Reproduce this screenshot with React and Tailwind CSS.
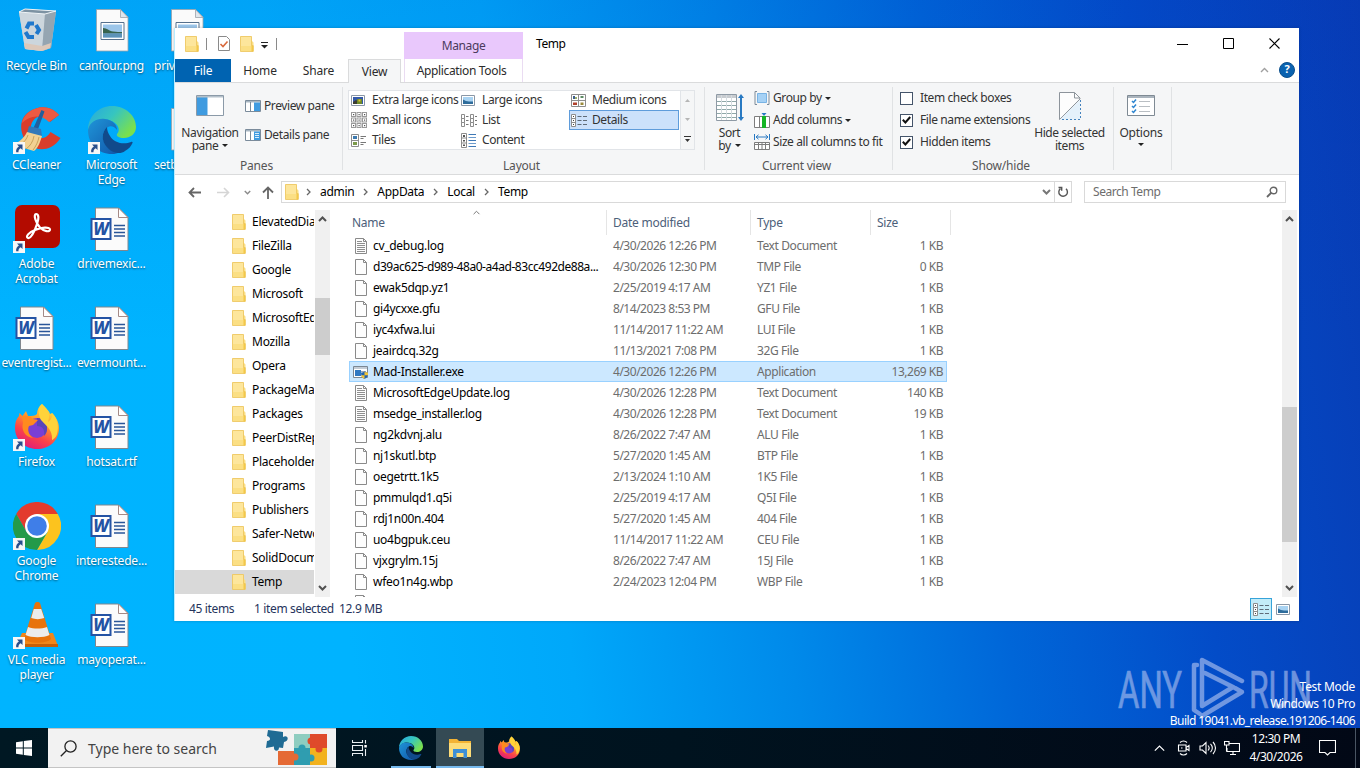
import React, { useState } from "react";

const files = [
  { name: "cv_debug.log", date: "4/30/2026 12:26 PM", type: "Text Document", size: "1 KB", icon: "text" },
  { name: "d39ac625-d989-48a0-a4ad-83cc492de88a...", date: "4/30/2026 12:30 PM", type: "TMP File", size: "0 KB" },
  { name: "ewak5dqp.yz1", date: "2/25/2019 4:17 AM", type: "YZ1 File", size: "1 KB" },
  { name: "gi4ycxxe.gfu", date: "8/14/2023 8:53 PM", type: "GFU File", size: "1 KB" },
  { name: "iyc4xfwa.lui", date: "11/14/2017 11:22 AM", type: "LUI File", size: "1 KB" },
  { name: "jeairdcq.32g", date: "11/13/2021 7:08 PM", type: "32G File", size: "1 KB" },
  { name: "Mad-Installer.exe", date: "4/30/2026 12:26 PM", type: "Application", size: "13,269 KB", icon: "app" },
  { name: "MicrosoftEdgeUpdate.log", date: "4/30/2026 12:28 PM", type: "Text Document", size: "140 KB", icon: "text" },
  { name: "msedge_installer.log", date: "4/30/2026 12:28 PM", type: "Text Document", size: "19 KB", icon: "text" },
  { name: "ng2kdvnj.alu", date: "8/26/2022 7:47 AM", type: "ALU File", size: "1 KB" },
  { name: "nj1skutl.btp", date: "5/27/2020 1:45 AM", type: "BTP File", size: "1 KB" },
  { name: "oegetrtt.1k5", date: "2/13/2024 1:10 AM", type: "1K5 File", size: "1 KB" },
  { name: "pmmulqd1.q5i", date: "2/25/2019 4:17 AM", type: "Q5I File", size: "1 KB" },
  { name: "rdj1n00n.404", date: "5/27/2020 1:45 AM", type: "404 File", size: "1 KB" },
  { name: "uo4bgpuk.ceu", date: "11/14/2017 11:22 AM", type: "CEU File", size: "1 KB" },
  { name: "vjxgrylm.15j", date: "8/26/2022 7:47 AM", type: "15J File", size: "1 KB" },
  { name: "wfeo1n4g.wbp", date: "2/24/2023 12:04 PM", type: "WBP File", size: "1 KB" },
];

const folders = [
  "ElevatedDia",
  "FileZilla",
  "Google",
  "Microsoft",
  "MicrosoftEd",
  "Mozilla",
  "Opera",
  "PackageMa",
  "Packages",
  "PeerDistRep",
  "Placeholder",
  "Programs",
  "Publishers",
  "Safer-Netwo",
  "SolidDocum",
  "Temp",
];

/* ---------- small icons ---------- */

const Folder = ({ className = "w-3.5 h-4" }) => (
  <svg viewBox="0 0 14 16" className={className}>
    <path d="M.5.5h11v4l2 2v9H.5z" fill="#fbdf84" />
    <path d="M.5.5h11v9.5h-11z" fill="#fde69c" />
    <path d="M11.5 9.5h2v6h-2z" fill="#f5c842" />
    <path d="M.5.5h11v9h1.500v6H.5z" fill="none" stroke="#ecc45a" strokeWidth=".8" />
  </svg>
);

const FileIcon = ({ type }) => {
  if (type === "app") {
    return (
      <svg viewBox="0 0 16 16" className="w-4 h-4">
        <path d="M.5 2.500h14v11H.5z" fill="#fff" stroke="#7b8793" />
        <path d="M1 3h13v2H1z" fill="#c3ccd6" />
        <path d="M2 6h6v6H2z" fill="#2f78c2" />
        <path d="M8 7h5v1H8z" fill="#9aa7b4" />
        <path d="M11.500 7.500c1 .8 2.300 1 3.500 1 0 3.500-1 5.500-3.500 6.500C9 14 8 12 8 8.500c1.200 0 2.500-.2 3.500-1z" fill="#2264ae" />
        <path d="M11.500 8v3.300H15C15 8.800 15 9 15 8.500c-1.200 0-2.500-.2-3.500-.5zM8.200 11.300h3.300V15C9.500 14.200 8.500 13 8.200 11.300z" fill="#f3c436" />
      </svg>
    );
  }
  return (
    <svg viewBox="0 0 12 16" className="w-3 h-4">
      <path d="M.5.5h8l3 3v12H.5z" fill="#fdfdfd" stroke="#8a8a8a" />
      <path d="M8.500.5v3h3" fill="none" stroke="#8a8a8a" />
      {type === "text" && <path d="M2 3.500h5M2 5.500h8M2 7.500h8M2 9.500h8M2 11.500h8M2 13.500h8" stroke="#8f8f8f" />}
    </svg>
  );
};

const Caret = () => (
  <svg viewBox="0 0 6 3" className="w-[6px] h-[3px] shrink-0">
    <path d="M0 0h6L3 3z" fill="#222" />
  </svg>
);

const Crumb = () => (
  <svg viewBox="0 0 5 8" className="w-[5px] h-2 shrink-0">
    <path d="M1 1l3 3-3 3" fill="none" stroke="#666" strokeWidth="1.300" />
  </svg>
);

const Chevron = ({ up, className = "w-[9px] h-[6px]", color = "#505050", width = 2 }) => (
  <svg viewBox="0 0 9 6" className={className}>
    <path d={up ? "M1 5l3.500-3.500L8 5" : "M1 1l3.500 3.500L8 1"} fill="none" stroke={color} strokeWidth={width} />
  </svg>
);

const Picture = ({ variant }) => (
  <svg viewBox="0 0 14 11" className="w-3.5 h-[11px]">
    <path d="M.5.5h13v10H.5z" fill="#fff" stroke="#8a97a6" />
    <path d="M2 2h10v7H2z" fill={variant === "xl" ? "#3459a8" : "#a9d3f2"} />
    {variant === "xl" ? (
      <>
        <path d="M2 7l3-2 3 2v2H2z" fill="#3c3c30" />
        <path d="M6 4h5v5H6z" fill="#6d8a2a" />
        <path d="M7.500 4.500h2v2h-2z" fill="#e5c32e" />
      </>
    ) : (
      <path d="M2 4.500l3 1.500 3 .5 4 0v2.500H2z" fill="#2e6c9b" />
    )}
  </svg>
);

const MediumIcon = () => (
  <svg viewBox="0 0 15 13" className="w-[15px] h-[13px]">
    <path d="M.5.500h14v12H.5zM7.500.5v12M.5 6.500h14" fill="#fff" stroke="#8d8d8d" />
    <path d="M2 2h2v3H2z" fill="#3f5f8f" />
    <path d="M4 3h2v2H4z" fill="#9ab06a" />
    <path d="M9.500 2h3v2h-3z" fill="#5c8b64" />
    <path d="M2 8.500h4V11H2z" fill="#b0412c" />
    <path d="M9.500 8.500h3V11h-3z" fill="#9a8a3a" />
  </svg>
);

const SmallIcon = () => (
  <svg viewBox="0 0 16 16" className="w-4 h-4">
    {[0, 5.5, 11].map((y) =>
      [0, 5.5, 11].map((x) => (
        <g key={`${x}-${y}`}>
          <rect x={x + 0.5} y={y + 0.5} width="4" height="4" fill="#fff" stroke="#9a9a9a" />
          <rect x={x + 2} y={y + 2} width="1.200" height="1.200" fill="#555" />
        </g>
      ))
    )}
  </svg>
);

const ListIcon = () => (
  <svg viewBox="0 0 16 13" className="w-4 h-[13px]">
    {[0, 4, 8].map((y) => (
      <g key={y} fill="none" stroke="#8d8d8d">
        <path d={`M.5 ${y + 0.5}h3v4h-3zM9.500 ${y + 0.5}h3v4h-3z`} />
        <path d={`M5 ${y + 2.5}h2.500M14 ${y + 2.5}h2`} stroke="#777" />
      </g>
    ))}
  </svg>
);

const DetailsIcon = () => (
  <svg viewBox="0 0 16 13" className="w-4 h-[13px]">
    <path d="M.5.5h4v12h-4zM.5 4.500h4M.5 8.500h4" fill="#fff" stroke="#8d8d8d" />
    <path d="M2 2h1v1H2zM2 6h1v1H2zM2 10h1v1H2z" fill="#444" />
    <path d="M6.500 2.500h4M12 2.500h4M6.500 6.500h4M12 6.500h4M6.500 10.500h4M12 10.500h4" stroke="#5f6b78" />
  </svg>
);

const TilesIcon = () => (
  <svg viewBox="0 0 15 13" className="w-[15px] h-[13px]">
    <path d="M.5.5h7v12h-7zM.5 6.500h7" fill="#fff" stroke="#8d8d8d" />
    <path d="M2 2h4v3H2z" fill="#3f7bb0" />
    <path d="M2 8h4v3H2z" fill="#7b9a4a" />
    <path d="M9.500 2.500H15M9.500 4.500h3M9.500 8.500H15M9.500 10.500h3" stroke="#777" />
  </svg>
);

const ContentIcon = () => (
  <svg viewBox="0 0 15 15" className="w-[15px] h-[15px]">
    <path d="M.5.5h5v14h-5zM.5 5h5M.5 10h5" fill="#fff" stroke="#8d8d8d" />
    <path d="M2 2h2v2H2zM2 7h2v1.500H2zM2 11.500h2v1.500H2z" fill="#555" />
    <path d="M7.500 1.500H15M7.500 7.500H15M7.500 13.500H15" stroke="#3f78b5" />
    <path d="M7.500 4.500H15M7.500 10.500H15" stroke="#6d9bcc" />
  </svg>
);

const PaneIcon = ({ kind }) => (
  <svg viewBox="0 0 16 12" className="w-4 h-3 shrink-0">
    <path d="M.5.5h15v11H.5z" fill="#fff" stroke="#7a8b9b" />
    <path d="M1 1h14v1.500H1z" fill="#a8b6c2" />
    <path d="M5.500 2v9" stroke="#7a8b9b" />
    <path d="M9 2.500h6V11H9z" fill="#3f9be0" />
    {kind === "details" && <path d="M10 4.500h4M10 6.500h4M10 8.500h4" stroke="#d6ebfb" />}
  </svg>
);

/* ---------- desktop icons ---------- */

const Shortcut = () => (
  <svg viewBox="0 0 12 12" className="absolute left-0 bottom-0 w-3 h-3">
    <path d="M0 0h12v12H0z" fill="#f7f7f7" />
    <path d="M4 2.500h5.500V8L7.700 6.300C6 7.300 5.300 8.500 5.500 10.300H3.200C2.700 7.500 4 5.700 5.900 4.500z" fill="#2a4f8c" />
  </svg>
);

const WordDoc = () => (
  <svg viewBox="0 0 48 48" className="w-12 h-12">
    <path d="M7.500 3h23l9.500 9.500v33H7.500z" fill="#fbfbfb" stroke="#80878e" />
    <path d="M30.500 3v9.500H40z" fill="#fff" stroke="#a58a86" strokeWidth="1" />
    <path d="M26 20.500h11M26 24h11M26 27.500h11M26 31h11" stroke="#2a5699" strokeWidth="1.300" />
    <path d="M3.500 14h19v20h-19z" fill="#fff" stroke="#2453a4" strokeWidth="2" />
    <text x="13" y="30" fontSize="17" fontWeight="800" fontStyle="italic" textAnchor="middle" fill="#2453a4" fontFamily="Noto Sans, sans-serif">W</text>
  </svg>
);

const PngDoc = () => (
  <svg viewBox="0 0 48 48" className="w-12 h-12">
    <path d="M8.500 2.500h24l7.500 7.500v34H8.500z" fill="#fafafa" stroke="#9aa2aa" strokeWidth=".8" />
    <path d="M32.500 2.500v8H40z" fill="#dfe6ec" stroke="#9aa2aa" strokeWidth=".8" />
    <path d="M13 15.500h23v17H13z" fill="#fff" stroke="#56708c" />
    <path d="M15 17.500h19v13H15z" fill="#9cc6ea" />
    <path d="M15 21c4 0 6 3 10 3.500s6 .5 9 .5v1.500H15z" fill="#37634e" />
    <path d="M15 26.500h19v4H15z" fill="#5d93b8" />
  </svg>
);

const RecycleBin = () => (
  <svg viewBox="0 0 48 48" className="w-12 h-12">
    <path d="M6 5l6-3 31 2-5 37-9 3-17-2z" fill="#b9c6d0" />
    <path d="M6 5l26 2-3 37-17-2z" fill="#ccd6dd" />
    <path d="M32 7l11-3-5 37-9 3z" fill="#95a5b1" />
    <path d="M6 5l6-3 31 2-11 3z" fill="#7d93a3" stroke="#eef3f6" strokeWidth="1" />
    <path d="M11 36l18 3 9-3-.8 5-8 3-17-2z" fill="#dcc8ba" />
    <g fill="none" stroke="#1f78cc" strokeWidth="4">
      <path d="M13.500 21.500l2.500-5h5" />
      <path d="M23 18l3 5-2.500 4" />
      <path d="M21 30h-5.500l-3-5" />
    </g>
  </svg>
);

const CCleaner = () => (
  <svg viewBox="0 0 48 48" className="w-12 h-12">
    <path d="M46 9C40 2 31-.5 23 2.500 11 6 6 16 9 27c3 13 17 20 29 14 4-2 7-5 9.500-9l-10-6c-3 6-10 8-15 4-6-4-6-12-1-17 5-4 12-3 15.500 3z" fill="#d93d2b" />
    <path d="M46 9C40 2 31-.5 23 2.500 15 5 10 11 9 17c8-8 19-9 27-1z" fill="#ec5a43" />
    <path d="M28.500 4l3 1.500-7 19-4.500-1.500z" fill="#235f9c" />
    <path d="M16 20l12 3 1 7-15-3z" fill="#3279b9" />
    <path d="M14 26l15 4c-2 6-3 11-8 15L0 39c6-3 11-7 14-13z" fill="#f2d192" />
    <path d="M15 29c-2 6-6 9-10 11m16-10c-1 6-4 10-8 13m13-12c-1 5-3 9-6 13" stroke="#caa25a" fill="none" />
  </svg>
);

const EdgeIcon = ({ className = "w-12 h-12" }) => (
  <svg viewBox="0 0 48 48" className={className}>
    <defs>
      <linearGradient id="edgeTop" x1="0" y1="0" x2="1" y2=".6">
        <stop offset="0" stopColor="#27a7e0" />
        <stop offset=".5" stopColor="#36c5c0" />
        <stop offset="1" stopColor="#7be04c" />
      </linearGradient>
      <linearGradient id="edgeLeft" x1="0" y1="0" x2="1" y2="1">
        <stop offset="0" stopColor="#1f95d8" />
        <stop offset="1" stopColor="#1155a8" />
      </linearGradient>
    </defs>
    <path d="M0 24C0 10 11 0 24 0c14 0 24 10 24 21 0 7-6 11-12 11-5 0-8-2-7-4 3-3 2-8-2-11C20 11 5 11 0 24z" fill="url(#edgeTop)" />
    <path d="M0 24c2-9 10-12 17-11 8 1 12 6 12 11-2-3-6-5-9-3-6 3-7 12-2 18 4 6 10 8 14 7-3 1.500-5 2-8 2C10 48 0 38 0 24z" fill="url(#edgeLeft)" />
    <path d="M19 21c-6 6-5 14-1 19 5 7 14 9 19 5 4-2 6-5 7.500-8 .5-1-.5-1.500-1.500-1-7 3-17 1-21-6-2-3-3-6-3-9z" fill="#114a8b" />
  </svg>
);

const Acrobat = () => (
  <svg viewBox="0 0 48 48" className="w-12 h-12">
    <rect x="2" y="0" width="45" height="43" rx="7" fill="#b30b00" />
    <path
      d="M23 9c3 0 3 5 1 10-2 6-6 15-9 14-3-1 1-6 7-8 6-2.500 15-3.500 15-.5s-6 2-10-2-7-13-4-13.500z"
      fill="none"
      stroke="#fff"
      strokeWidth="2.200"
    />
  </svg>
);

const Firefox = ({ className = "w-12 h-12" }) => (
  <svg viewBox="0 0 48 48" className={className}>
    <defs>
      <linearGradient id="fox" x1=".8" y1="0" x2=".3" y2="1">
        <stop offset="0" stopColor="#fff04a" />
        <stop offset=".4" stopColor="#ff9a2a" />
        <stop offset=".7" stopColor="#fb4448" />
        <stop offset="1" stopColor="#e01c79" />
      </linearGradient>
    </defs>
    <path d="M29 1c3 4 7 6 8 10l2-1c4 4 7 9 7 15 0 13-10 21-22 21S2 37 2 25c0-5 1-9 4-12l.5-3 3 3L13 8l2 5c4 0 7 0 9-2 0-4 2-8 5-10z" fill="url(#fox)" />
    <circle cx="24" cy="25" r="10" fill="#7a3fd4" />
    <path d="M24 15c7 0 10 5 10 10 0 4-1 6-3 8 1-6-1-10-7-10z" fill="#5a45b8" />
    <path d="M9 13c5-1 9 0 11 3l5 1-5 5-4 1c-2 4 0 9 4 12-8-1-12-8-10-15z" fill="#ff8a1e" />
    <path d="M29 1c8 7 8 12 6 18 5-3 4-8 4-9 6 6 7 14 5 21-1 4-5 6-5 6 1-11-7-15-11-20-3-5-3-11 1-16z" fill="#ffd33a" />
  </svg>
);

const Chrome = () => (
  <svg viewBox="0 0 48 48" className="w-12 h-12">
    <path d="M24 12h20.800a24 24 0 0 1-20.800 36l10.400-18z" fill="#fcc31e" />
    <path d="M13.600 30L3.200 12A24 24 0 0 1 44.800 12H24z" fill="#e33b2e" />
    <path d="M3.200 12l10.400 18L24 36l10.400-6L24 48A24 24 0 0 1 3.200 12z" fill="#249a49" />
    <circle cx="24" cy="24" r="12" fill="#fff" />
    <circle cx="24" cy="24" r="9.800" fill="#3f7ee8" />
  </svg>
);

const Vlc = () => (
  <svg viewBox="0 0 48 48" className="w-12 h-12">
    <path d="M9 32h31l5 13H3z" fill="#f0861a" />
    <path d="M3 43h42v3H3z" fill="#c65f08" />
    <path d="M22 2c1-1.500 4-1.500 5 0l11 36c-5 5-22 5-27 0z" fill="#e8730c" />
    <path d="M20.800 8h7.400l3 9c-4 1.500-9 1.500-13 0z" fill="#ececec" />
    <path d="M15 26c6 2 13 2 19 0l2.500 8c-6 3-18 3-24 0z" fill="#ececec" />
  </svg>
);

const desktopColumns = [
  [
    { label: "Recycle Bin", icon: <RecycleBin /> },
    { label: "CCleaner", icon: <CCleaner />, shortcut: true },
    { label: "Adobe\nAcrobat", icon: <Acrobat />, shortcut: true },
    { label: "eventregist...", icon: <WordDoc /> },
    { label: "Firefox", icon: <Firefox />, shortcut: true },
    { label: "Google\nChrome", icon: <Chrome />, shortcut: true },
    { label: "VLC media\nplayer", icon: <Vlc />, shortcut: true },
  ],
  [
    { label: "canfour.png", icon: <PngDoc /> },
    { label: "Microsoft\nEdge", icon: <EdgeIcon />, shortcut: true },
    { label: "drivemexic...", icon: <WordDoc /> },
    { label: "evermount...", icon: <WordDoc /> },
    { label: "hotsat.rtf", icon: <WordDoc /> },
    { label: "interestede...", icon: <WordDoc /> },
    { label: "mayoperat...", icon: <WordDoc /> },
  ],
];

// third column is mostly covered by the explorer window
const coveredColumn = [{ label: "priv" }, { label: "setb" }];

const Desktop = () => (
  <div className="absolute -left-px top-[7px] flex">
    {desktopColumns.map((column, i) => (
      <div key={i} className="w-[75px] flex flex-col">
        {column.map((item) => (
          <div key={item.label} className="h-[99px] flex flex-col items-center">
            <div className="relative w-12 h-12 shrink-0">
              {item.icon}
              {item.shortcut && <Shortcut />}
            </div>
            <p className="mt-[3px] text-xs leading-[15px] tracking-[-0.2px] text-white text-center whitespace-pre [text-shadow:0_1px_2px_rgba(0,0,0,0.55)]">
              {item.label}
            </p>
          </div>
        ))}
      </div>
    ))}
    <div className="w-[75px] flex flex-col">
      {coveredColumn.map((item) => (
        <div key={item.label} className="h-[99px] flex flex-col pl-[5px]">
          <div className="w-12 h-12 ml-[9px] shrink-0">
            <PngDoc />
          </div>
          <p className="mt-[3px] text-xs leading-[15px] tracking-[-0.2px] text-white [text-shadow:0_1px_2px_rgba(0,0,0,0.55)]">
            {item.label}
          </p>
        </div>
      ))}
    </div>
  </div>
);

/* ---------- explorer window ---------- */

const TitleBar = () => (
  <div className="h-[31px] flex shrink-0">
    <div className="w-[229px] flex items-center pl-2.5">
      <Folder />
      <div className="w-px h-3 bg-[#8a8a8a] ml-[7px]" />
      <svg viewBox="0 0 12 15" className="w-3 h-[15px] ml-[11px]">
        <path d="M.5.5h8l3 3v11H.5z" fill="#fff" stroke="#8a8a8a" />
        <path d="M2.500 8l2.500 2.500 4.500-5" fill="none" stroke="#d8693c" strokeWidth="1.600" />
      </svg>
      <Folder className="w-3.5 h-4 ml-2.5" />
      <svg viewBox="0 0 7 7" className="w-[7px] h-[7px] ml-[7px] mt-1">
        <path d="M0 .5h7" stroke="#222" />
        <path d="M0 3h7L3.500 6.500z" fill="#222" />
      </svg>
      <div className="w-px h-3 bg-[#8a8a8a] ml-[8px]" />
    </div>
    <div className="w-[119px] mt-1 bg-[#e9c8fc] flex items-center justify-center text-xs tracking-[-0.4px] text-[#4b3a5c]">Manage</div>
    <div className="flex-1 pl-[13px] flex items-center text-xs tracking-[-0.4px] text-black pt-px">Temp</div>
    <div className="flex items-center gap-[35px] pr-[19px]">
      <svg viewBox="0 0 11 11" className="w-[11px] h-[11px]">
        <path d="M0 6.500h11" stroke="#000" />
      </svg>
      <svg viewBox="0 0 11 11" className="w-[11px] h-[11px]">
        <path d="M.5.5h10v10H.5z" fill="none" stroke="#000" />
      </svg>
      <svg viewBox="0 0 11 11" className="w-[11px] h-[11px]">
        <path d="M.5.5l10 10M10.500.5l-10 10" stroke="#000" strokeWidth="1.100" />
      </svg>
    </div>
  </div>
);

const RibbonTabs = () => (
  <div className="h-[23px] flex shrink-0 text-xs text-[#2b2b2b] tracking-[-0.15px]">
    <div className="w-[56px] h-[23px] bg-[#0063b1] text-white flex items-center justify-center">File</div>
    <div className="w-[58px] flex items-center justify-center">Home</div>
    <div className="w-[59px] flex items-center justify-center">Share</div>
    <div className="w-[53px] h-6 relative z-10 bg-[#f5f6f7] border border-b-0 border-[#dadbdc] flex items-center justify-center">
      View
    </div>
    <div className="w-[119px] ml-[3px] border-x border-[#eadcf2] flex items-center justify-center pr-1 tracking-[-0.35px]">
      Application Tools
    </div>
    <div className="flex-1 flex items-center justify-end gap-2.5 pr-1 pb-0.5">
      <Chevron up className="w-[9px] h-[6px]" color="#a0a0a0" width={1.4} />
      <div className="w-4 h-4 rounded-full bg-[#0a62b0] border border-[#0b4f8c] text-white text-[11px] font-bold flex items-center justify-center">
        ?
      </div>
    </div>
  </div>
);

const Group = ({ label, className, children }) => (
  <div className={`flex flex-col shrink-0 border-r border-[#e0e2e4] my-1 ${className}`}>
    <div className="h-[70px] flex">{children}</div>
    <div className="h-4 pt-1 pr-1 text-center leading-4 tracking-[-0.2px] text-[#555]">{label}</div>
  </div>
);

const Gallery = () => {
  const cells = [
    { label: "Extra large icons", icon: <Picture variant="xl" /> },
    { label: "Large icons", icon: <Picture /> },
    { label: "Medium icons", icon: <MediumIcon /> },
    { label: "Small icons", icon: <SmallIcon /> },
    { label: "List", icon: <ListIcon /> },
    { label: "Details", icon: <DetailsIcon /> },
    { label: "Tiles", icon: <TilesIcon /> },
    { label: "Content", icon: <ContentIcon /> },
  ];
  return (
    <div className="mt-[3px] ml-[5px] w-[347px] h-[60px] flex border border-[#e1e4e8] bg-white">
      <div className="grid grid-cols-[110px_110px_110px] grid-rows-[20px_20px_20px] w-[331px]">
        {cells.map((cell) => (
          <div
            key={cell.label}
            className={
              cell.label === "Details"
                ? "flex items-center border border-[#5f9cdb] bg-[#cce1fb] -mt-px h-5"
                : "flex items-center border border-transparent -mt-px h-5"
            }
          >
            <div className="w-[22px] flex items-center pl-px shrink-0">{cell.icon}</div>
            {cell.label}
          </div>
        ))}
      </div>
      <div className="flex-1 border-l border-[#e1e4e8] bg-[#f5f6f7] flex flex-col items-center justify-between py-1.5">
        <svg viewBox="0 0 5 3" className="w-[5px] h-[3px] mt-0.5">
          <path d="M0 3h5L2.500 0z" fill="#b5b5b5" />
        </svg>
        <svg viewBox="0 0 5 3" className="w-[5px] h-[3px]">
          <path d="M0 0h5L2.500 3z" fill="#b5b5b5" />
        </svg>
        <svg viewBox="0 0 7 7" className="w-[7px] h-[7px]">
          <path d="M0 .5h7" stroke="#333" />
          <path d="M1 3h5L3.500 6z" fill="#333" />
        </svg>
      </div>
    </div>
  );
};

const CheckItem = ({ label, defaultChecked }) => {
  const [checked, setChecked] = useState(defaultChecked);
  return (
    <div className="flex items-center h-[22px]" onClick={() => setChecked(!checked)}>
      <div className="w-[13px] h-[13px] shrink-0 bg-white border border-[#44546a] flex items-center justify-center mr-[7px]">
        {checked && (
          <svg viewBox="0 0 9 8" className="w-[9px] h-2">
            <path d="M.8 3.800L3.400 6.500 8.200 1" fill="none" stroke="#111" strokeWidth="2" />
          </svg>
        )}
      </div>
      {label}
    </div>
  );
};

const Ribbon = () => (
  <div className="h-[93px] flex shrink-0 bg-[#f5f6f7] border-y border-[#dadbdc] text-xs tracking-[-0.4px] text-[#333]">
    <Group label="Panes" className="w-[168px]">
      <div className="w-[70px] flex flex-col items-center pt-2">
        <svg viewBox="0 0 28 21" className="w-7 h-[21px]">
          <path d="M.5.5h27v20H.5z" fill="#fff" stroke="#8b9aa8" />
          <path d="M1 1h10.500v19H1z" fill="#3f9be0" />
          <path d="M1 1h26v1.500H1z" fill="#b4c0ca" />
        </svg>
        <div className="mt-[10px] leading-[13px] text-center">
          Navigation
          <div className="flex items-center justify-center gap-1">
            pane <Caret />
          </div>
        </div>
      </div>
      <div className="flex flex-col pt-2 gap-[7px]">
        <div className="h-[22px] flex items-center gap-[3px]">
          <PaneIcon /> Preview pane
        </div>
        <div className="h-[22px] flex items-center gap-[3px]">
          <PaneIcon kind="details" /> Details pane
        </div>
      </div>
    </Group>
    <Group label="Layout" className="w-[362px]">
      <Gallery />
    </Group>
    <Group label="Current view" className="w-[188px]">
      <div className="w-[49px] flex flex-col items-center pt-1.5">
        <svg viewBox="0 0 28 29" className="w-7 h-[29px]">
          <path d="M.5 1.500h20v26H.5z" fill="#fff" stroke="#8f9aa5" />
          <path d="M1 2h19v3H1z" fill="#c8ccd0" />
          <path d="M1 8.500h19M1 12.500h19M1 16.500h19M1 20.500h19M1 24.500h19" stroke="#8fa8a8" strokeDasharray="4 1" />
          <path d="M5.500 2v25M10.500 2v25M15.500 2v25" stroke="#d5dbe0" />
          <path d="M25 3v23" stroke="#2879c2" strokeWidth="2" />
          <path d="M22 5l3-4 3 4zM22 24l3 4 3-4z" fill="#2879c2" />
        </svg>
        <div className="mt-[4px] leading-[13px] text-center">
          Sort
          <div className="flex items-center justify-center gap-1">
            by <Caret />
          </div>
        </div>
      </div>
      <div className="flex flex-col">
        <div className="h-[22px] flex items-center gap-[3px]">
          <svg viewBox="0 0 16 14" className="w-4 h-3.5">
            <path d="M3 .5H1v13h2M13 .5h2v13h-2" fill="none" stroke="#7d8b99" />
            <path d="M3.500 2.500h9v9h-9z" fill="#a5d1f5" stroke="#78b3e4" />
          </svg>
          Group by <Caret />
        </div>
        <div className="h-[22px] flex items-center gap-[3px]">
          <svg viewBox="0 0 16 15" className="w-4 h-[15px]">
            <path d="M.5 3.500h15v11H.5zM5.500 3.500v11" fill="#fff" stroke="#7d7d7d" />
            <path d="M8 3h4v12H8z" fill="#15b425" />
            <path d="M7.500 0h5L10 3z" fill="#2879c2" />
          </svg>
          Add columns <Caret />
        </div>
        <div className="h-[22px] flex items-center gap-[3px]">
          <svg viewBox="0 0 16 16" className="w-4 h-4">
            <path d="M.5 0v6M15.500 0v6M2 3h12M4.500.8L2 3l2.500 2.200M11.500.8L14 3l-2.500 2.200" fill="none" stroke="#2879c2" />
            <path d="M.5 8.500h15v7H.5zM4.500 8.500v7M8 8.500v7M11.500 8.500v7M.5 10.500h15" fill="#fff" stroke="#7d7d7d" />
          </svg>
          Size all columns to fit
        </div>
      </div>
    </Group>
    <Group label="Show/hide" className="w-[221px]">
      <div className="w-[139px] pl-[7px] flex flex-col">
        <CheckItem label="Item check boxes" defaultChecked={false} />
        <CheckItem label="File name extensions" defaultChecked />
        <CheckItem label="Hidden items" defaultChecked />
      </div>
      <div className="w-[75px] flex flex-col items-center pt-[5px]">
        <svg viewBox="0 0 22 28" className="w-[22px] h-7">
          <path d="M.5 27V.5h15l5.500 5.500z" fill="#fdfdfd" stroke="none" />
          <path d="M.5 27.500V.5h15l5.500 5.500v1L.5 27.500" fill="none" stroke="#8d949b" />
          <path d="M15.500.5V6H21" fill="none" stroke="#8d949b" />
          <path d="M21 8v19.500H1z" fill="#e4f1fb" />
          <path d="M21.500 8v19.500H1" fill="none" stroke="#4482bd" strokeDasharray="2 2" />
        </svg>
        <div className="mt-[6px] leading-[13px] text-center">
          Hide selected
          <br />
          items
        </div>
      </div>
    </Group>
    <Group label="" className="w-[58px]">
      <div className="w-[54px] flex flex-col items-center pt-2">
        <svg viewBox="0 0 28 21" className="w-7 h-[21px]">
          <path d="M.5.5h27v20H.5z" fill="#fff" stroke="#7f8a94" />
          <path d="M1 1h26v2H1z" fill="#aab4bd" />
          <path d="M5 6l1.500 1.500L9 4.500M5 11l1.500 1.500L9 9.500M5 16l1.500 1.500L9 14.500" fill="none" stroke="#2f86d0" strokeWidth="1.500" />
          <path d="M12 6.500h11M12 11.500h11M12 16.500h11" stroke="#b9bec3" />
        </svg>
        <div className="mt-[10px] leading-[13px] tracking-[-0.2px]">Options</div>
        <div className="mt-1">
          <Caret />
        </div>
      </div>
    </Group>
  </div>
);

const AddressBar = () => (
  <div className="h-[34px] flex items-center shrink-0 text-xs tracking-[-0.3px] text-black">
    <div className="w-[106px] flex items-center pl-[13px]">
      <svg viewBox="0 0 13 11" className="w-[13px] h-[11px]">
        <path d="M6 1L1.500 5.500 6 10M1.500 5.500H13" fill="none" stroke="#666" strokeWidth="1.800" />
      </svg>
      <svg viewBox="0 0 13 11" className="w-[13px] h-[11px] ml-[16px]">
        <path d="M7 1l4.500 4.500L7 10M0 5.500h11.500" fill="none" stroke="#d5d5d5" strokeWidth="1.600" />
      </svg>
      <Chevron className="w-[7px] h-[5px] ml-[14px]" color="#8a8a8a" width={1.8} />
      <svg viewBox="0 0 12 13" className="w-3 h-[13px] ml-[11px]">
        <path d="M1 6.500L6 1.500l5 5M6 1.500V13" fill="none" stroke="#666" strokeWidth="1.800" />
      </svg>
    </div>
    <div className="w-[791px] h-[22px] border border-[#d9d9d9] flex items-center pl-[3px]">
      <Folder />
      <div className="flex items-center gap-[9px] ml-[7px]">
        <Crumb /> admin <Crumb /> AppData <Crumb /> Local <Crumb /> Temp
      </div>
      <div className="flex-1" />
      <Chevron className="w-[9px] h-[6px] mr-[3px]" color="#777" />
      <div className="w-[17px] h-full border-l border-[#d9d9d9] flex items-center justify-center">
        <svg viewBox="0 0 12 12" className="w-3 h-3">
          <path d="M9 2.800A4.300 4.300 0 1 1 3.500 2.600M1.500 1.500h3.200v3.200" fill="none" stroke="#555" strokeWidth="1.400" />
        </svg>
      </div>
    </div>
    <div className="w-[202px] h-[22px] ml-3 border border-[#d9d9d9] flex items-center justify-between pl-2 pr-[7px] tracking-[-0.45px] text-[#6d6d6d]">
      Search Temp
      <svg viewBox="0 0 12 12" className="w-3 h-3">
        <circle cx="7.500" cy="4.500" r="3.300" fill="none" stroke="#666" strokeWidth="1.400" />
        <path d="M5 7L1 11" stroke="#666" strokeWidth="1.800" />
      </svg>
    </div>
  </div>
);

const NavPane = () => (
  <div className="flex w-[155px] h-full shrink-0">
    <div className="w-[140px] overflow-hidden">
      {folders.map((name) => (
        <div
          key={name}
          className={
            name === "Temp"
              ? "h-6 flex items-center pl-[57px] gap-1.5 bg-[#d9d9d9] w-[139px]"
              : "h-6 flex items-center pl-[57px] gap-1.5 w-[139px] overflow-hidden"
          }
        >
          <Folder className="w-3.5 h-4 shrink-0" />
          {name}
        </div>
      ))}
    </div>
    <div className="w-[15px] bg-[#f0f0f0] flex flex-col items-center py-1.5">
      <Chevron up />
      <div className="w-[15px] h-[57px] mt-[76px] bg-[#cdcdcd]" />
      <div className="flex-1" />
      <Chevron />
    </div>
  </div>
);

const FileList = () => {
  const [selected, setSelected] = useState("Mad-Installer.exe");
  return (
    <div className="flex-1 pl-[19px] overflow-hidden">
      <div className="h-[25px] flex text-[#4c607a]">
        <div className="relative w-[258px] border-r border-[#e5e5e5] pl-[3px] flex items-center">
          Name
          <Chevron up className="absolute left-[123px] top-0 w-[9px] h-[5px]" color="#777" width={1.2} />
        </div>
        <div className="w-[144px] border-r border-[#e5e5e5] pl-1.5 flex items-center">Date modified</div>
        <div className="w-[120px] border-r border-[#e5e5e5] pl-1.5 flex items-center">Type</div>
        <div className="w-20 border-r border-[#e5e5e5] pl-1.5 flex items-center">Size</div>
      </div>
      {files.map((file) => (
        <div
          key={file.name}
          onClick={() => setSelected(file.name)}
          className={
            file.name === selected
              ? "w-[598px] h-[21px] flex items-center bg-[#cce8ff] outline outline-1 -outline-offset-1 outline-[#99d1ff] text-[#6d6d6d]"
              : "w-[598px] h-[21px] flex items-center text-[#6d6d6d]"
          }
        >
          <div className="w-6 flex items-center justify-center shrink-0">
            <FileIcon type={file.icon} />
          </div>
          <div
            className={
              file.name.length > 30 ? "w-[240px] text-black tracking-[-0.45px]" : "w-[240px] text-black tracking-[-0.3px]"
            }
          >
            {file.name}
          </div>
          <div className="w-[144px] tracking-[-0.48px]">{file.date}</div>
          <div className="w-[100px] tracking-[-0.4px]">{file.type}</div>
          <div className="w-[86px] text-right tracking-[-0.5px]">{file.size}</div>
        </div>
      ))}
      <div className="w-6 h-[21px] flex items-center justify-center">
        <FileIcon />
      </div>
    </div>
  );
};

const Explorer = () => (
  <div className="absolute left-[174px] top-7 w-[1125px] h-[593px] bg-white border-l border-[#b8ecff] flex flex-col shadow-[0_0_3px_rgba(0,0,0,0.2)]">
    <TitleBar />
    <RibbonTabs />
    <Ribbon />
    <AddressBar />
    <div className="h-[387px] mt-px flex shrink-0 text-xs tracking-[-0.25px] text-black">
      <NavPane />
      <FileList />
      <div className="w-[15px] mr-[2px] bg-[#f0f0f0] flex flex-col items-center py-1.5">
        <Chevron up />
        <div className="w-[15px] h-[135px] mt-[185px] bg-[#cdcdcd]" />
        <div className="flex-1" />
        <Chevron />
      </div>
    </div>
    <div className="h-6 flex items-center pl-[14px] pr-[5px] text-xs tracking-[-0.35px] text-[#26345c]">
      <div className="w-[65px]">45 items</div>
      <div className="w-[85px]">1 item selected</div>
      <div>12.9 MB</div>
      <div className="flex-1" />
      <div className="w-[22px] h-[22px] bg-[#c4ecf8] border border-[#36a3d9] flex items-center justify-center">
        <DetailsIcon />
      </div>
      <div className="w-[22px] flex items-center justify-center">
        <Picture />
      </div>
    </div>
  </div>
);

const Watermark = () => (
  <>
    <svg viewBox="0 0 196 64" className="absolute left-[1117px] top-[656px] w-[196px] h-16 opacity-60">
      <g fill="#b3c4f0" stroke="#b3c4f0" strokeWidth=".7" fontFamily="Roboto, sans-serif" fontSize="52">
        <text x="1" y="52" textLength="64" lengthAdjust="spacingAndGlyphs">ANY</text>
        <text x="132" y="52" textLength="63" lengthAdjust="spacingAndGlyphs">RUN</text>
      </g>
      <g fill="none" stroke="#b9c9f2" strokeWidth="4.500" strokeLinejoin="round" strokeLinecap="round">
        <path d="M80 9h-3v45l6 4" />
        <path d="M125 25L85 4v46l31-19-28-14" />
        <path d="M85 60l40-24-7-4" />
      </g>
    </svg>
    <div className="absolute right-[5px] top-[678px] text-xs leading-[17px] text-white text-right">
      <div className="tracking-[-0.3px]">Test Mode</div>
      <div className="tracking-[-0.4px]">Windows 10 Pro</div>
      <div className="tracking-[-0.57px]">Build 19041.vb_release.191206-1406</div>
    </div>
  </>
);

const Taskbar = () => (
  <div className="absolute left-0 bottom-0 w-full h-10 flex bg-linear-to-r from-[#001823] via-[#00131f] to-[#020816] text-white">
    <div className="w-12 flex items-center justify-center">
      <svg viewBox="0 0 16 16" className="w-4 h-4">
        <path d="M0 2.200l6.800-1v6.300H0zM7.800 1.100L16 0v7.500H7.800zM0 8.500h6.800v6.300L0 13.800zM7.800 8.500H16V16l-8.200-1.100z" fill="#fff" />
      </svg>
    </div>
    <div className="w-[288px] bg-[#f2f2f2] border-y border-[#c4c4c4] flex items-center pl-3 text-[#444] overflow-hidden">
      <svg viewBox="0 0 17 17" className="w-[17px] h-[17px]">
        <circle cx="10.500" cy="6.500" r="5.600" fill="none" stroke="#222" strokeWidth="1.300" />
        <path d="M6.500 10.500L.8 16.200" stroke="#222" strokeWidth="1.300" />
      </svg>
      <span className="ml-[11px] text-[14px]">Type here to search</span>
      <div className="flex-1" />
      <svg viewBox="0 0 64 38" className="w-16 h-[38px] mr-[7px]">
        <path d="M13 22h17v14H13z" fill="#e56a35" />
        <path d="M29 5h17v14H29z" fill="#8ecdc0" />
        <path d="M45 5h17v15H45z" fill="#df4a2b" />
        <path d="M29 19h17v17H29z" fill="#2f9db0" />
        <path d="M45 19h17v17H45z" fill="#f2b21f" />
        <circle cx="30" cy="28" r="3.500" fill="#e56a35" />
        <circle cx="46" cy="12" r="3.500" fill="#df4a2b" />
        <circle cx="54" cy="20" r="3.500" fill="#df4a2b" />
        <circle cx="46" cy="29" r="3.500" fill="#2f9db0" />
        <circle cx="37" cy="19" r="3.500" fill="#2f9db0" />
        <path d="M3 1l15 2v5c5-3 7 4 1 5l-1 6-4-.5c0 5-6 4-5-1L1 19l1-7c4 0 4-4 0-5z" fill="#1f6b94" />
      </svg>
    </div>
    <div className="w-12 flex items-center justify-center">
      <svg viewBox="0 0 16 16" className="w-4 h-4">
        <path d="M.5 0v2.500h10V0M.5 16v-2.500h10V16M.5 5.500h10v5H.5zM13.500 0v3.500M13.500 9v7" fill="none" stroke="#e8eef2" strokeWidth="1.100" />
        <path d="M12.300 5h2.500v2.500h-2.500z" fill="#fff" />
      </svg>
    </div>
    <div className="w-[52px] pl-0.5 flex flex-col items-center justify-end">
      <EdgeIcon className="w-6 h-6 mb-[6px]" />
      <div className="w-10 h-0.5 bg-[#76b9ed]" />
    </div>
    <div className="w-12 bg-[#344a54] flex flex-col items-center justify-end">
      <svg viewBox="0 0 22 19" className="w-[22px] h-[19px] mb-2">
        <path d="M0 0h8l2 2h12v16H0z" fill="#f3b334" />
        <path d="M0 4h22v14H0z" fill="#fddc78" />
        <path d="M4 10h14v9h-3.500v-5h-7v5H4z" fill="#3d8fd6" />
      </svg>
      <div className="w-12 h-0.5 bg-[#76b9ed]" />
    </div>
    <div className="w-[50px] flex items-center justify-center">
      <Firefox className="w-6 h-6" />
    </div>
    <div className="flex-1" />
    <div className="flex items-center">
      <Chevron up className="w-[13px] h-[8px]" color="#fff" width={0.9} />
      <svg viewBox="0 0 14 16" className="w-3.5 h-4 ml-[11px]">
        <path d="M3 2.500C5 .5 8 .5 10 2.500M3 13.500c2 2 5 2 7 0M1.500 5h7.500v6H1.500zM9 7.500l3-2v5l-3-2M4 8h1.500" fill="none" stroke="#fff" strokeWidth="1.100" />
      </svg>
      <svg viewBox="0 0 18 14" className="w-[18px] h-3.5 ml-2">
        <path d="M1 5h2.500L7 1.500v11L3.500 9H1zM9 4.500c1.300 1.400 1.300 3.600 0 5M11.500 2.800c2.400 2.400 2.400 6 0 8.400M14 1c3.300 3.400 3.300 8.600 0 12" fill="none" stroke="#fff" strokeWidth="1.100" />
      </svg>
      <svg viewBox="0 0 16 14" className="w-4 h-3.5 ml-[7px]">
        <path d="M5 2.500h10.500v8H3V7M9 10.500v3M6 13.500h6M.5.5h4.500v3.500H.5zM2.500 4v6.500" fill="none" stroke="#fff" strokeWidth="1.100" />
      </svg>
      <div className="w-[60px] ml-[6px] text-center text-xs leading-[18px] tracking-[-0.45px] -mt-px">
        12:30 PM
        <br />
        4/30/2026
      </div>
      <svg viewBox="0 0 17 16" className="w-[17px] h-4 ml-[13px]">
        <path d="M.5.5h16v12h-5.500L8.500 15 6 12.500H.5z" fill="none" stroke="#fff" strokeWidth="1.100" />
      </svg>
      <div className="w-px h-10 bg-[#4a5563] ml-[19px] mr-1" />
    </div>
  </div>
);

export default function App() {
  return (
    <div className="relative w-[1360px] h-[768px] overflow-hidden whitespace-nowrap font-['Noto_Sans','Open_Sans',sans-serif] bg-[linear-gradient(to_bottom,rgba(0,50,190,0.12),rgba(0,50,190,0)_45%),linear-gradient(82deg,#00b4ff_0%,#00b3ff_25%,#00a8fa_40%,#008aea_55%,#0066d8_70%,#034cc8_84%,#083cb4_100%)]">
      <Desktop />
      <Watermark />
      <Explorer />
      <Taskbar />
    </div>
  );
}
